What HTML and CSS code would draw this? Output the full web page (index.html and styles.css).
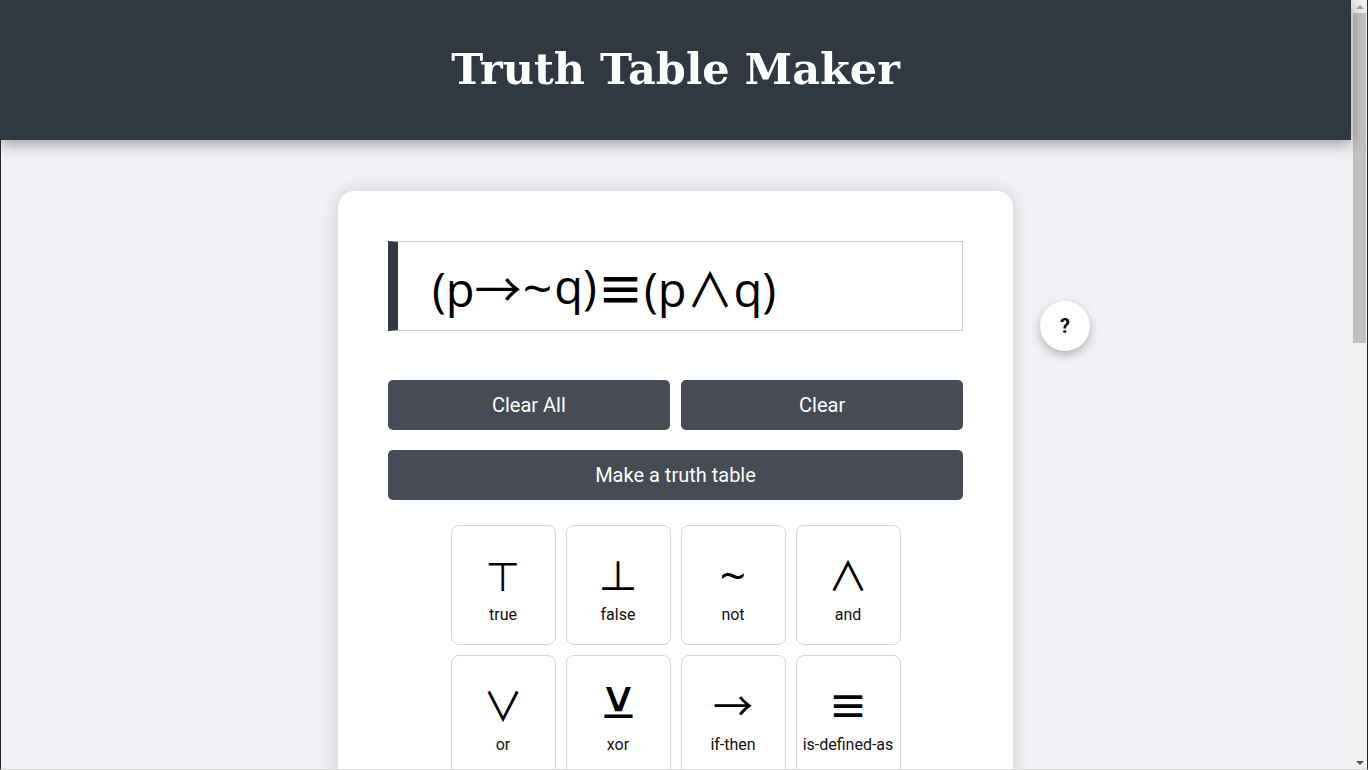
FILE: index.html
```html
<!DOCTYPE html>
<html lang="en">
<head>
<meta charset="utf-8">
<title>Truth Table Maker</title>
<link rel="stylesheet" href="styles.css">
</head>
<body>
<div class="viewport">
  <header class="site-header">
    <h1 class="site-title">Truth Table Maker</h1>
  </header>
  <main class="page">
    <section class="card">
      <div class="expr-input">(p→<span class="tilde-op">~</span>q)<span class="bold-op">≡</span>(p∧q)</div>
      <div class="btn-row">
        <button class="btn btn-half">Clear All</button>
        <button class="btn btn-half">Clear</button>
      </div>
      <button class="btn btn-full">Make a truth table</button>
      <div class="keys">
        <button class="key"><span class="key-sym">⊤</span><span class="key-label">true</span></button>
        <button class="key"><span class="key-sym">⊥</span><span class="key-label">false</span></button>
        <button class="key"><span class="key-sym key-tilde">~</span><span class="key-label">not</span></button>
        <button class="key"><span class="key-sym">∧</span><span class="key-label">and</span></button>
        <button class="key"><span class="key-sym">∨</span><span class="key-label">or</span></button>
        <button class="key"><span class="key-sym key-xor">⊻</span><span class="key-label">xor</span></button>
        <button class="key"><span class="key-sym">→</span><span class="key-label">if-then</span></button>
        <button class="key"><span class="key-sym bold-op">≡</span><span class="key-label">is-defined-as</span></button>
        <button class="key"><span class="key-sym">↔</span><span class="key-label">iff</span></button>
        <button class="key"><span class="key-sym">(</span><span class="key-label">left</span></button>
        <button class="key"><span class="key-sym">)</span><span class="key-label">right</span></button>
        <button class="key"><span class="key-sym">⌫</span><span class="key-label">delete</span></button>
      </div>
      <button class="help" aria-label="Help">?</button>
    </section>
  </main>
</div>
<div class="scrollbar" aria-hidden="true">
  <span class="sb-up"></span>
  <span class="sb-thumb"></span>
  <span class="sb-down"></span>
</div>
<div class="frame" aria-hidden="true"></div>
</body>
</html>
```

FILE: styles.css
```css
html, body {
  margin: 0;
  padding: 0;
}
body {
  background: #f0f0f5;
  font-family: Roboto, "Noto Sans", sans-serif;
  color: #000;
}
.viewport {
  margin-right: 17px;
}
.site-header {
  background: #323842;
  height: 140px;
  display: flex;
  align-items: center;
  justify-content: center;
  box-shadow: 0 4px 14px rgba(0, 0, 0, 0.35);
  position: relative;
  z-index: 1;
}
.site-title {
  margin: 0;
  color: #fff;
  font-family: "DejaVu Serif", serif;
  font-weight: bold;
  font-size: 43px;
  padding-bottom: 2px;
}
.page {
  padding: 51px 0 700px;
}
.card {
  position: relative;
  width: 675px;
  margin: 0 auto;
  background: #fff;
  border-radius: 16px;
  box-shadow: 0 2px 18px rgba(0, 0, 0, 0.16);
  padding: 50px;
  box-sizing: border-box;
}
.expr-input {
  box-sizing: border-box;
  height: 90px;
  border: 1px solid #cfcfcf;
  border-left: 10px solid #323842;
  display: flex;
  align-items: center;
  padding-left: 34px;
  font-family: "Open Sans", "Noto Sans CJK SC", sans-serif;
  font-size: 47px;
  color: #000;
  white-space: pre;
}
.tilde-op {
  font-size: 52px;
  margin: 0 2px 0 1px;
}
.bold-op {
  font-weight: 700;
}
.btn-row {
  margin-top: 49px;
  display: flex;
  justify-content: space-between;
}
.btn {
  font-family: Roboto, sans-serif;
  font-size: 20px;
  color: #fff;
  background: #464b55;
  border: none;
  border-radius: 5px;
  height: 50px;
  padding: 0;
  cursor: pointer;
}
.btn-half {
  width: 49%;
}
.btn-full {
  display: block;
  width: 100%;
  margin-top: 20px;
}
.keys {
  margin: 25px auto 0;
  width: 450px;
  display: grid;
  grid-template-columns: repeat(4, 105px);
  grid-auto-rows: 120px;
  gap: 10px;
}
.key {
  background: #fff;
  border: 1px solid #d4d4d4;
  border-radius: 8px;
  padding: 27px 0 0;
  display: flex;
  flex-direction: column;
  align-items: center;
  font-family: Roboto, sans-serif;
  color: #000;
  cursor: pointer;
}
.key-sym {
  font-family: "Noto Sans CJK SC", "DejaVu Sans", sans-serif;
  font-size: 40px;
  line-height: 42px;
  height: 42px;
}
.key-tilde {
  font-family: "Open Sans", sans-serif;
  font-size: 46px;
}
.key-xor {
  font-family: "DejaVu Sans", sans-serif;
  font-size: 42px;
  display: inline-block;
  transform: scaleX(1.25);
}
.key-label {
  margin-top: 10px;
  font-size: 16px;
  line-height: 20px;
  color: #111;
}
.help {
  position: absolute;
  left: calc(100% + 27px);
  top: 110px;
  width: 50px;
  height: 50px;
  border-radius: 50%;
  border: none;
  background: #fff;
  box-shadow: 0 4px 10px rgba(0, 0, 0, 0.25);
  font-family: Roboto, sans-serif;
  font-weight: bold;
  font-size: 20px;
  color: #000;
  padding: 0;
  cursor: pointer;
}
.scrollbar {
  position: fixed;
  top: 0;
  right: 0;
  width: 17px;
  height: 100vh;
  background: #f0f0f0;
}
.sb-up {
  position: absolute;
  top: 5px;
  left: 5px;
  border-left: 4px solid transparent;
  border-right: 4px solid transparent;
  border-bottom: 4px solid #a3a3a3;
}
.sb-thumb {
  position: absolute;
  top: 13px;
  left: 2px;
  width: 13px;
  height: 330px;
  background: #c1c1c1;
}
.sb-down {
  position: absolute;
  bottom: 5px;
  left: 5px;
  border-left: 4px solid transparent;
  border-right: 4px solid transparent;
  border-top: 4px solid #505050;
}
.frame {
  position: fixed;
  inset: 0;
  border-left: 1px solid #2a2a2a;
  border-right: 1px solid #2a2a2a;
  border-bottom: 1px solid #d8d8d8;
  pointer-events: none;
}
```
